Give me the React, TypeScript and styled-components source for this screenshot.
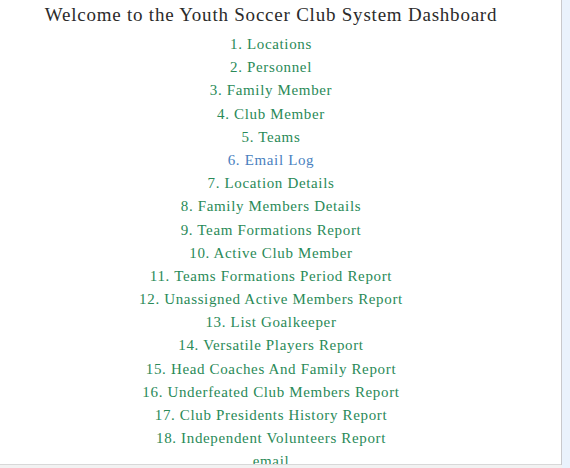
import React from "react";
import styled, { createGlobalStyle } from "styled-components";

const Global = createGlobalStyle`
  html, body { margin: 0; padding: 0; background: #ffffff; }
  body { width: 570px; height: 468px; overflow: hidden; }
`;

const Frame = styled.div`
  display: grid;
  grid-template-columns: 561px 1px 8px;
  grid-template-rows: 464px 1px 3px;
  width: 570px;
  height: 468px;
`;

const Main = styled.main`
  grid-column: 1;
  grid-row: 1;
  overflow: hidden;
  background: #ffffff;
  font-family: "Liberation Serif", "Times New Roman", serif;
  text-align: center;
  padding-right: 19px;
`;

const VLine = styled.div`
  grid-column: 2;
  grid-row: 1 / 3;
  background: #c9c9cc;
`;

const Strip = styled.div`
  grid-column: 3;
  grid-row: 1 / 4;
  background: #eaf2fc;
`;

const HLine = styled.div`
  grid-column: 1;
  grid-row: 2;
  background: #d8d8d8;
`;

const Bottom = styled.div`
  grid-column: 1 / 3;
  grid-row: 3;
  background: #f2f2f2;
`;

const Title = styled.h1`
  margin: 4px 0 7px;
  font-size: 19px;
  font-weight: normal;
  letter-spacing: 0.78px;
  color: #2b2b2b;
  line-height: 22px;
`;

const List = styled.nav`
  display: flex;
  flex-direction: column;
  align-items: center;
`;

const Item = styled.a<{ $active?: boolean }>`
  display: block;
  font-size: 15px;
  letter-spacing: 0.65px;
  line-height: 23.18px;
  color: ${(p) => (p.$active ? "#4a7fc0" : "#2a8a58")};
  text-decoration: none;
`;

const items = [
  "1. Locations",
  "2. Personnel",
  "3. Family Member",
  "4. Club Member",
  "5. Teams",
  "6. Email Log",
  "7. Location Details",
  "8. Family Members Details",
  "9. Team Formations Report",
  "10. Active Club Member",
  "11. Teams Formations Period Report",
  "12. Unassigned Active Members Report",
  "13. List Goalkeeper",
  "14. Versatile Players Report",
  "15. Head Coaches And Family Report",
  "16. Underfeated Club Members Report",
  "17. Club Presidents History Report",
  "18. Independent Volunteers Report",
  "email",
];

export default function App() {
  return (
    <>
      <Global />
      <Frame>
        <Main>
          <Title>Welcome to the Youth Soccer Club System Dashboard</Title>
          <List>
            {items.map((t) => (
              <Item key={t} href="#" $active={t === "6. Email Log"}>
                {t}
              </Item>
            ))}
          </List>
        </Main>
        <VLine />
        <Strip />
        <HLine />
        <Bottom />
      </Frame>
    </>
  );
}
